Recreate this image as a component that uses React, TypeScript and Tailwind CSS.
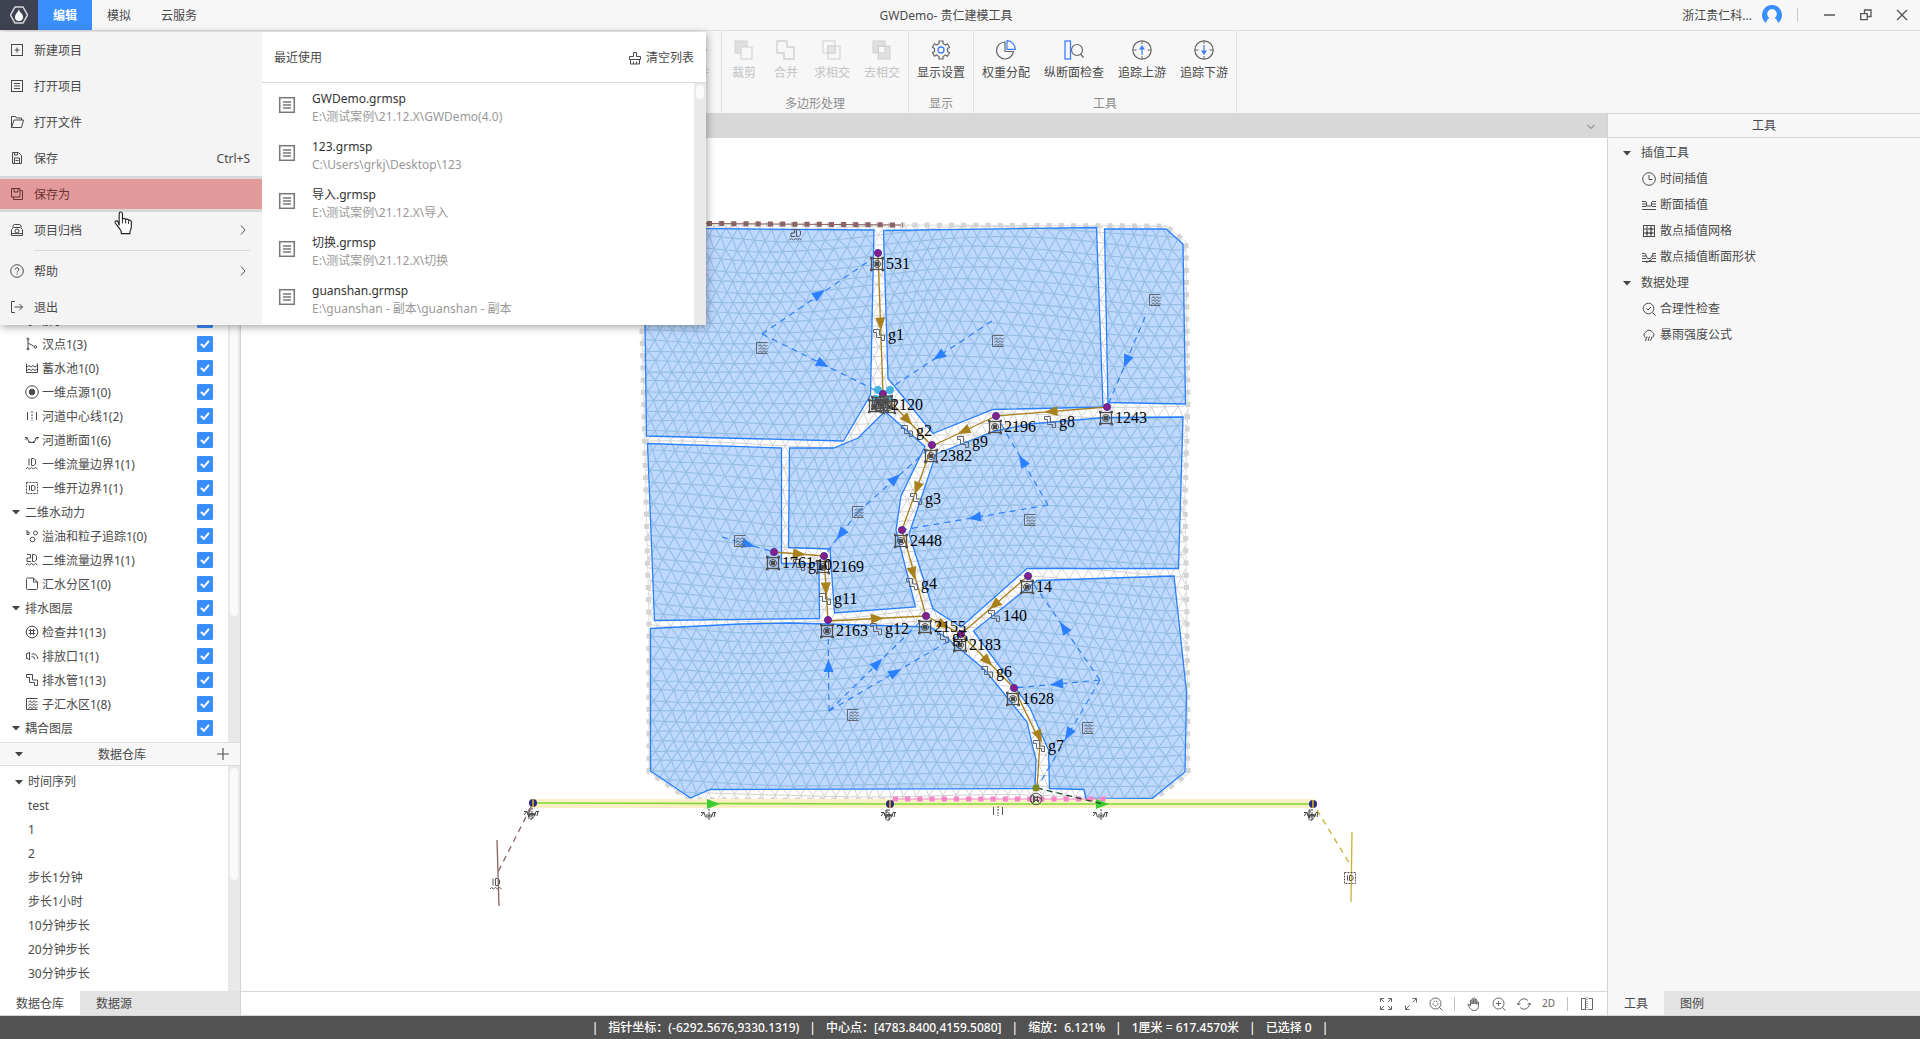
import React, { useState } from 'react';
import type { ReactNode } from 'react';

/* ------------------------------------------------------------------ */
/* Icons (14 x 14 grid)                                                */
/* ------------------------------------------------------------------ */

const glyphs: Record<string, ReactNode> = {
  newProject: (<><rect x="1.5" y="1.5" width="11" height="11" /><path d="M7 4.5v5M4.5 7h5" /></>),
  openProject: (<><rect x="1.5" y="1.5" width="11" height="11" /><path d="M4 4.5h6M4 7h6M4 9.5h6" /></>),
  openFile: (<path d="M1.5 12.5v-11h4l1 1.5h5v2M1.5 12.5l2.5-7.5h9.5l-2 7.5z" />),
  save: (<><path d="M2.5 1.5h6l3 3v8h-9z" /><path d="M4.500 1.500v2.500h3v-2.500M4.500 12.500v-5.500h5v5.500M5.500 9.500h3" /></>),
  saveAs: (<><path d="M1.500 1.500h8.500v8.500h-8.500z" /><path d="M4 1.500v3.500h4v-3.500M10 3.500h2.500v9h-9v-2.500" /></>),
  archive: (<><path d="M3 4.500v-2l1.500-1h5l1.500 1v2M1.500 12.500v-6l2-2h7l2 2v6z" /><circle cx="7" cy="8" r="2" /><path d="M1.500 10.500h11" /></>),
  help: (<><circle cx="7" cy="7" r="6.300" /><path d="M5.200 5.500a1.800 1.800 0 1 1 2.600 1.700c-.6.300-.8.600-.8 1.300M7 9.700v1" /></>),
  exit: (<path d="M5 1.500h-3.500v11h3.500M4.500 7h8M9.500 4l3 3-3 3" />),
  brush: (<path d="M5.500 1.500h3v4h4v3h-11v-3h4zM2.500 8.500v4.500h9v-4.500M5.500 13v-2.500M8.500 13v-2.500" />),
  branch: (<><path d="M3 3v9M3 6l6.500 3.500" /><circle cx="3" cy="2" r="1" /><circle cx="3" cy="12" r="1" /><circle cx="10.500" cy="10" r="1.200" /></>),
  pond: (<path d="M1.500 2.500v9h11v-9M2 6l2-1.500 2 1.500 2-1.500 2 1.500 2-1.500M2 9.500l2-1.500 2 1.500 2-1.500 2 1.500 2-1.500" />),
  pointSource: (<><circle cx="7" cy="7" r="6.300" /><circle cx="7" cy="7" r="2.800" fill="currentColor" /></>),
  centerline: (<><path d="M2.500 3v8M11.500 3v8" /><path d="M7 2v10" strokeDasharray="2 1" /></>),
  crossSection: (<path d="M0 4.500h2l-1.500 2.500M2 4.500l2 5h5.500l1.500-5h3M11.500 4.500l1 2M5 9.500v-1.500M8.500 9.500v-1.500" />),
  flow1d: (<><path d="M4 1.500v7M6.500 1.500v7h2l2-1.500v-4l-2-1.500z" /><path d="M1 12l1.500-1.500 2 1.500 2-1.500 2 1.500 2-1.500 2 1.500" /></>),
  open1d: (<><rect x="1.500" y="1.500" width="11" height="11" strokeDasharray="2 1" /><path d="M4.500 4.500v5M6.500 4.500v5h2l1.500-1v-3l-1.500-1z" /></>),
  particles: (<><path d="M2 1v4.500h2v-2.500h-2" /><circle cx="10.500" cy="4" r="2" /><circle cx="7.500" cy="10.500" r="2.300" /></>),
  flow2d: (<><path d="M2 1.500h3.500v3.500h-3.500v3.500h4M7.500 1.500v7h2l2-1.500v-4l-2-1.500z" /><path d="M1 12l1.500-1.500 2 1.500 2-1.500 2 1.500 2-1.500 2 1.500" /></>),
  area: (<path d="M1.500 2.500v9q0 1 1 1h9q1 0 1-1v-6.500l-4-4h-6q-1 0-1 1.500zM8.500 1v4h4" />),
  manhole: (<><circle cx="7" cy="7" r="5.800" /><path d="M5.500 4v6M8.500 4v6M4 5.500h6M4 8.500h6" /></>),
  outfall: (<path d="M1.500 4.500h1.500l1.500-1.500v8l-1.500-1.500h-1.500zM6.500 5q5-1.500 6.500 5M6.500 7.500q3 0 3.500 3" />),
  pipe: (<path d="M1.500 1.500h6v5.500h5v5.500h-3v-3h-5v-5h-3z" />),
  subcatchment: (<><path d="M12.500 1.500h-11v11h11" /><path d="M3.500 5.500l1.500-1.800 2 1.800 2-1.800 2 1.800 1.500-1.500M3.500 8.500l1.500-1.800 2 1.800 2-1.800 2 1.800 1.500-1.500M3.500 11.500l1.500-1.800 2 1.800 2-1.800 2 1.800 1.500-1.500" /></>),
  clock: (<><circle cx="7" cy="7" r="6.300" /><path d="M7 3v4.500h3.500" /></>),
  sectionInterp: (<path d="M0 3.500h4M0 6h4M0 8.500h4M0 11.500h14M10 3.500h4M10 6h4M10 8.500h4M4.500 4v4h5v-4" />),
  gridInterp: (<><rect x="1.500" y="1.500" width="11" height="11" /><path d="M1.500 5h11M1.500 9h11M5 1.500v11M9 1.500v11" /><circle cx="5" cy="9" r="1" fill="currentColor" /><circle cx="9" cy="5" r="1" fill="currentColor" /><circle cx="9" cy="9" r="1" fill="currentColor" /></>),
  shapeInterp: (<path d="M0 3.500h3.500M0 6h4M0 8.500h4M0 11.500h14M10.500 3.500h3.500M10 6h4M10 8.500h4M3.500 4l2 4.500h3l3-5.500M4 12.500l6-3" />),
  check: (<><circle cx="6.500" cy="6.500" r="5.300" /><path d="M4.500 6.500l1.500 1.500 3-3M10.500 10.500l3 3" /></>),
  rain: (<path d="M3.500 9.500a2.800 2.800 0 0 1 0-5 3.800 3.800 0 0 1 7 0 2.800 2.800 0 0 1 0 5M5 8.500l-1.500 4.500M7.500 8.500l-1.500 4.500M10 8.500l-1.500 4.500" />),
  fullIn: (<path d="M1.500 5v-3.500h3.500M1.500 1.500l3.500 3.500M9 1.500h3.500v3.500M12.500 1.500l-3.500 3.500M1.500 9v3.500h3.500M1.500 12.500l3.500-3.500M12.500 9v3.500h-3.500M12.500 12.500l-3.500-3.500" />),
  expand: (<path d="M8.500 1.500h4v4M12.500 1.500l-4 4M1.500 8.500v4h4M1.500 12.500l4-4" />),
  zoomArea: (<><circle cx="6.500" cy="6.500" r="5.500" /><circle cx="6.500" cy="6.500" r="2.500" strokeDasharray="2 1" /><path d="M10.500 10.500l3 3" /></>),
  hand: (<path d="M3.500 9v-5.500q.8-1 1.500 0v3.500-5q.8-1 1.600 0v5-5.500q.8-1 1.600 0v5.500-4.500q.8-1 1.600 0v5-2.500q1-.8 1.700 0v3.500q0 5-4.500 5-2.500 0-4-2.500l-2-3q0-1.500 1.200-.8z" />),
  zoomIn: (<><circle cx="6.500" cy="6.500" r="5.500" /><path d="M10.500 10.500l3 3M6.500 4v5M4 6.500h5" /></>),
  rotate: (<path d="M1.500 7.500a5.500 5.500 0 0 1 9.500-4M12.500 6.500a5.500 5.500 0 0 1-9.500 4M0 6l1.500 2 2-1.500M14 8l-1.500-2-2 1.500" />),
  split: (<><path d="M5.500 1.500h-4v11h4zM8.500 1.500h4v11h-4" /><path d="M7 0v14" strokeDasharray="1 1" /></>),
};

function Icon({ name }: { name: string }) {
  return (
    <svg viewBox="0 0 14 14" className="size-3.5 shrink-0" fill="none" stroke="currentColor" strokeWidth="1" aria-hidden="true">
      {glyphs[name]}
    </svg>
  );
}

function Caret() {
  return (
    <svg viewBox="0 0 8 5" className="h-[5px] w-2 shrink-0" aria-hidden="true">
      <path d="M0 0h8l-4 4.500z" fill="#444" />
    </svg>
  );
}

/* ------------------------------------------------------------------ */
/* Title bar                                                           */
/* ------------------------------------------------------------------ */

function TitleBar() {
  return (
    <header className="relative flex h-[31px] shrink-0 items-stretch border-b border-[#e0e0e0] bg-[#f7f7f7]">
      <div className="flex w-[38px] items-center justify-center bg-[#3f4250]">
        <svg viewBox="0 0 18 18" className="size-[18px]" fill="none" aria-hidden="true">
          <path d="M5 1h8l4.500 8-4.500 8h-8l-4.500-8z" stroke="#d8d8dc" strokeWidth="1.500" />
          <path d="M9 3c-.5 3-4 5-4 8a4 4 0 0 0 8 0c0-2-1-3-2-4-1-1-2-2.500-2-4z" fill="#fff" />
        </svg>
      </div>
      <nav className="flex">
        <button className="w-[54px] bg-[#3a8fff] pt-px font-bold text-white">编辑</button>
        <button className="w-[54px] pt-px">模拟</button>
        <button className="w-[66px] pt-px">云服务</button>
      </nav>
      <h1 className="pointer-events-none absolute inset-x-0 top-2 pr-7 text-center leading-4">GWDemo- 贵仁建模工具</h1>
      <div className="ml-auto flex items-center">
        <span className="pt-px">浙江贵仁科...</span>
        <svg viewBox="0 0 20 20" className="ml-2.5 size-5" aria-hidden="true">
          <path d="M4 18a10 10 0 1 1 12 0q-1-4-3.500-5a4.800 4.800 0 1 0-5 0q-2.500 1-3.500 5z" fill="#3a8fff" />
        </svg>
        <span className="ml-[15px] h-3.5 w-px bg-[#c8c8c8]" />
        <button aria-label="最小化" className="ml-3.5 flex w-9 justify-center">
          <svg viewBox="0 0 12 12" className="size-3"><path d="M0 6h11" stroke="#555" strokeWidth="1.500" /></svg>
        </button>
        <button aria-label="还原" className="flex w-9 justify-center">
          <svg viewBox="0 0 12 12" className="size-3" fill="none" stroke="#555" strokeWidth="1.300"><path d="M.7 4.700h6.500v6h-6.500zM4.500 4.500v-3.500h6.500v6.500h-3.500" /></svg>
        </button>
        <button aria-label="关闭" className="flex w-9 justify-center">
          <svg viewBox="0 0 12 12" className="size-3" stroke="#555" strokeWidth="1.400"><path d="M1 1l10 10M11 1l-10 10" /></svg>
        </button>
      </div>
    </header>
  );
}

/* ------------------------------------------------------------------ */
/* Ribbon                                                              */
/* ------------------------------------------------------------------ */

const ribbonGlyphs: Record<string, ReactNode> = {
  crop: (<><rect x="1" y="1" width="12" height="12" fill="#e0e0e0" stroke="#cfcfcf" /><rect x="7" y="7" width="11" height="12" fill="#f7f7f7" stroke="#cfcfcf" /></>),
  merge: (<path d="M1 1h10v6h7v12h-10v-6h-7z" fill="#f7f7f7" stroke="#cfcfcf" strokeWidth="1.300" />),
  intersect: (<><rect x="1" y="1" width="12" height="12" stroke="#cfcfcf" /><rect x="6" y="6" width="12" height="13" stroke="#cfcfcf" /><rect x="6" y="6" width="7" height="7" fill="#e4e4e4" stroke="#cfcfcf" /></>),
  exclude: (<><rect x="1" y="1" width="12" height="12" fill="#e0e0e0" stroke="#cfcfcf" /><rect x="6" y="6" width="12" height="13" fill="#e0e0e0" stroke="#cfcfcf" /><rect x="6.500" y="6.500" width="6.500" height="6.500" fill="#f7f7f7" stroke="#cfcfcf" /></>),
  gear: (<><path d="M8 1h4v2.500l2.500 1.500 2-1.200 2 3.400-2 1.300v3l2 1.300-2 3.400-2-1.200-2.500 1.500v2.500h-4v-2.500l-2.500-1.500-2 1.200-2-3.400 2-1.300v-3l-2-1.300 2-3.400 2 1.200 2.500-1.500z" stroke="#666" strokeWidth="1.200" /><circle cx="10" cy="10" r="3" stroke="#3f7dff" strokeWidth="1.300" /></>),
  pie: (<><path d="M9 2a8.500 8.500 0 1 0 8.500 9.500h-8.500z" stroke="#666" strokeWidth="1.200" /><path d="M11 .7a8.500 8.500 0 0 1 8.300 8.600h-8.300z" stroke="#3f7dff" strokeWidth="1.200" /></>),
  profile: (<><rect x="1" y="1" width="5.500" height="18" stroke="#3f7dff" strokeWidth="1.300" /><circle cx="13" cy="10" r="5.500" stroke="#666" strokeWidth="1.200" /><path d="M16.500 14l3 3.500" stroke="#666" strokeWidth="1.300" /></>),
  up: (<><circle cx="10" cy="10" r="9.200" stroke="#666" strokeWidth="1.200" /><path d="M10 1v3M10 16v3M1 10h3.500M15.500 10h3.500" stroke="#666" /><path d="M10 15v-7" stroke="#3f7dff" strokeWidth="1.200" /><path d="M7 9.500l3-4.500 3 4.500z" fill="#3f7dff" /></>),
  down: (<><circle cx="10" cy="10" r="9.200" stroke="#666" strokeWidth="1.200" /><path d="M10 1v3M10 16v3M1 10h3.500M15.500 10h3.500" stroke="#666" /><path d="M10 5v7" stroke="#3f7dff" strokeWidth="1.200" /><path d="M7 10.500l3 4.500 3-4.500z" fill="#3f7dff" /></>),
  line: (<path d="M0 10h20" stroke="#8fb4ff" strokeWidth="1.200" />),
};

interface Tool { icon: string; label: string; disabled?: boolean }

function RibbonGroup({ title, tools, className = '' }: { title?: string; tools: Tool[]; className?: string }) {
  return (
    <section className={`flex flex-col border-r border-[#e0e0e0] ${className}`}>
      <div className="flex justify-end px-px pt-[9px]">
        {tools.map((t) => (
          <button key={t.label} disabled={t.disabled} className="flex min-w-[42px] flex-col items-center gap-[5px] px-[7px] disabled:text-[#c4c4c4]">
            <svg viewBox="0 0 20 20" className="size-5" fill="none" aria-hidden="true">{ribbonGlyphs[t.icon]}</svg>
            <span className="whitespace-nowrap leading-4">{t.label}</span>
          </button>
        ))}
      </div>
      {title && <div className="mt-[15px] text-center leading-4 text-[#8c8c8c]">{title}</div>}
    </section>
  );
}

function Ribbon() {
  return (
    <div className="flex h-[82px] shrink-0 bg-[#f7f7f7]">
      <RibbonGroup className="w-[722px] pr-0.5" tools={[{ icon: 'line', label: '合并', disabled: true }]} />
      <RibbonGroup
        title="多边形处理"
        tools={[
          { icon: 'crop', label: '裁剪', disabled: true },
          { icon: 'merge', label: '合并', disabled: true },
          { icon: 'intersect', label: '求相交', disabled: true },
          { icon: 'exclude', label: '去相交', disabled: true },
        ]}
      />
      <RibbonGroup title="显示" tools={[{ icon: 'gear', label: '显示设置' }]} />
      <RibbonGroup
        title="工具"
        tools={[
          { icon: 'pie', label: '权重分配' },
          { icon: 'profile', label: '纵断面检查' },
          { icon: 'up', label: '追踪上游' },
          { icon: 'down', label: '追踪下游' },
        ]}
      />
    </div>
  );
}

/* ------------------------------------------------------------------ */
/* Left panel                                                          */
/* ------------------------------------------------------------------ */

const layers: { id: string; label: string; icon?: string }[] = [
  { id: 'net', label: '水动力' },
  { id: 'branch', label: '汊点1(3)', icon: 'branch' },
  { id: 'pond', label: '蓄水池1(0)', icon: 'pond' },
  { id: 'src', label: '一维点源1(0)', icon: 'pointSource' },
  { id: 'center', label: '河道中心线1(2)', icon: 'centerline' },
  { id: 'section', label: '河道断面1(6)', icon: 'crossSection' },
  { id: 'flow1', label: '一维流量边界1(1)', icon: 'flow1d' },
  { id: 'open1', label: '一维开边界1(1)', icon: 'open1d' },
  { id: 'hydro2', label: '二维水动力' },
  { id: 'oil', label: '溢油和粒子追踪1(0)', icon: 'particles' },
  { id: 'flow2', label: '二维流量边界1(1)', icon: 'flow2d' },
  { id: 'zone', label: '汇水分区1(0)', icon: 'area' },
  { id: 'drain', label: '排水图层' },
  { id: 'well', label: '检查井1(13)', icon: 'manhole' },
  { id: 'outfall', label: '排放口1(1)', icon: 'outfall' },
  { id: 'pipe', label: '排水管1(13)', icon: 'pipe' },
  { id: 'sub', label: '子汇水区1(8)', icon: 'subcatchment' },
  { id: 'couple', label: '耦合图层' },
];

function LayerRow({ id, label, icon }: { id: string; label: string; icon?: string }) {
  const [on, setOn] = useState(true);
  return (
    <li className="flex h-6 items-center pr-[15px]">
      {icon ? (
        <span className="ml-[25px] mr-[3px] flex"><Icon name={icon} /></span>
      ) : (
        <span className="ml-3 mr-[5px] flex"><Caret /></span>
      )}
      <label htmlFor={`layer-${id}`} className="flex-1 whitespace-nowrap pt-px">{label}</label>
      <span className="relative -mt-px flex size-4">
        <input
          id={`layer-${id}`}
          type="checkbox"
          checked={on}
          onChange={() => setOn(!on)}
          className="size-4 appearance-none rounded-[1px] border border-[#bbb] checked:border-[#3a8fff] checked:bg-[#3a8fff]"
        />
        {on && (
          <svg viewBox="0 0 16 16" className="pointer-events-none absolute inset-0" fill="none" aria-hidden="true">
            <path d="M4 8l3 2.800 5-6" stroke="#fff" strokeWidth="2" />
          </svg>
        )}
      </span>
    </li>
  );
}

const series = ['test', '1', '2', '步长1分钟', '步长1小时', '10分钟步长', '20分钟步长', '30分钟步长'];

function LeftPanel() {
  return (
    <aside className="flex w-[241px] shrink-0 flex-col border-r border-[#d4d4d4] bg-white">
      <div className="flex min-h-0 flex-1">
        <ul className="flex flex-1 flex-col justify-end overflow-hidden pb-0.5">
          {layers.map((l) => <LayerRow key={l.id} {...l} />)}
        </ul>
        <div className="w-3 bg-[#e9e9e9] px-0.5">
          <div className="h-4/5 rounded-full bg-[#fafafa]" />
        </div>
      </div>
      <div className="flex h-6 items-center border-y border-[#dedede] bg-[#f7f7f7] pl-[15px] pr-[11px]">
        <Caret />
        <h2 className="flex-1 pl-1 pt-px text-center">数据仓库</h2>
        <button aria-label="添加" className="flex">
          <svg viewBox="0 0 12 12" className="size-3" stroke="#555" strokeWidth="1.200"><path d="M6 0v12M0 6h12" /></svg>
        </button>
      </div>
      <div className="flex">
        <ul className="flex-1 pb-[5px] pt-1">
          <li className="flex h-6 items-center gap-[5px] pl-[15px]"><Caret />时间序列</li>
          {series.map((s) => <li key={s} className="flex h-6 items-center pl-7">{s}</li>)}
        </ul>
        <div className="w-3 bg-[#e9e9e9] px-0.5 pt-0.5">
          <div className="h-1/2 rounded-full bg-[#fafafa]" />
        </div>
      </div>
      <div className="flex h-[25px] border-b border-[#d4d4d4] bg-[#e3e3e3]">
        <button className="w-20 bg-white pt-px">数据仓库</button>
        <button className="w-[68px] pt-px">数据源</button>
      </div>
    </aside>
  );
}

/* ------------------------------------------------------------------ */
/* Map                                                                 */
/* ------------------------------------------------------------------ */

function buildMesh() {
  const cols = 50;
  const rows = 58;
  const vertex = (i: number, j: number): [number, number] => {
    const x = 624 + i * 12.2 + (j % 2 ? 6.1 : 0);
    const y = 212 + j * 10.6;
    const jitter = Math.sin(i * 12.9 + j * 78.2) * 0.8;
    return [
      x + 4 * Math.sin(y / 47) + 3 * Math.sin(x / 31 + y / 60) + jitter,
      y + 4 * Math.sin(x / 60 + 1) + 4 * Math.sin(y / 55 + x / 80) - jitter,
    ];
  };
  const parts: string[] = [];
  const seg = (a: [number, number], b: [number, number]) =>
    parts.push(`M${a[0].toFixed(1)} ${a[1].toFixed(1)}L${b[0].toFixed(1)} ${b[1].toFixed(1)}`);
  for (let j = 0; j < rows; j++) {
    for (let i = 0; i < cols; i++) {
      const p = vertex(i, j);
      seg(p, vertex(i + 1, j));
      seg(p, vertex(j % 2 ? i : i - 1, j + 1));
      seg(p, vertex(j % 2 ? i + 1 : i, j + 1));
    }
  }
  return parts.join('');
}

const mesh = buildMesh();

const domain =
  '644,224 901,225 1166,226 1186,242 1188,405 1185,500 1187,620 1188,774 1152,800 690,800 649,772 649,622 642,330 641,240';

const zones = [
  '644,228 874,230 870.5,395 843.5,441 646.5,436 645,325',
  '883.5,230.5 1096.5,227.5 1103,407 993,409.5 933,433.5 888,378.5',
  '1104.5,229 1166,229 1183,244 1185.5,404 1108,402.5',
  '647.5,443.5 781.5,448 781.5,563.5 819,563.5 819.5,618.5 654.5,620.5',
  '789.5,448 833.5,448 858,438 885,411.5 925,446.5 901,496 896,530 915.5,607 834.5,613 830,549 788.5,547.5',
  '936,454 995,431 1030,424 1105,417.5 1183,417 1178.5,568.5 1027,568.5 961,627 933,609 909,534',
  '1174,576 1037,580.5 973.5,631 1030,708 1048.5,750 1049.5,788.5 1084,789.5 1086,799.5 1152,798.5 1185,772 1186.5,692',
  '650.5,628.5 740,624 790,623 930,627 947,638 985,670 1027,722 1036,760 1035,788.5 710,789.5 690.5,798 650.5,771',
];

type Pt = [number, number];

const wells: { name: string; at: Pt }[] = [
  { name: '531', at: [878, 253] }, { name: '2120', at: [883, 394] }, { name: '2382', at: [932, 445] },
  { name: '2196', at: [996, 416] }, { name: '1243', at: [1107, 407] }, { name: '2448', at: [902, 530] },
  { name: '1761', at: [774, 552] }, { name: '2169', at: [824, 556] }, { name: '2163', at: [828, 620] },
  { name: '2155', at: [926, 616] }, { name: '2183', at: [961, 634] }, { name: '14', at: [1028, 576] },
  { name: '1628', at: [1014, 688] },
];

const pipes: { name: string; path: Pt[]; icon: Pt; arrow?: Pt }[] = [
  { name: 'g1', path: [[878, 253], [883, 394]], icon: [879, 335] },
  { name: 'g2', path: [[883, 394], [932, 446]], icon: [907, 431] },
  { name: 'g3', path: [[932, 446], [902, 530]], icon: [916, 499] },
  { name: 'g4', path: [[902, 530], [926, 616]], icon: [912, 584], arrow: [913, 573] },
  { name: 'g5', path: [[926, 616], [961, 634]], icon: [943, 637] },
  { name: 'g6', path: [[961, 634], [1014, 688]], icon: [987, 672] },
  { name: 'g7', path: [[1014, 688], [1040, 742], [1037, 788]], icon: [1039, 746], arrow: [1039, 736] },
  { name: 'g8', path: [[1107, 407], [996, 416]], icon: [1050, 422] },
  { name: 'g9', path: [[996, 416], [932, 446]], icon: [963, 442] },
  { name: 'g10', path: [[774, 552], [824, 556]], icon: [799, 565] },
  { name: 'g11', path: [[824, 556], [828, 621]], icon: [825, 599] },
  { name: 'g12', path: [[828, 621], [926, 616]], icon: [876, 629] },
  { name: '140', path: [[1028, 576], [961, 634]], icon: [994, 616] },
];

const links: { from: Pt; to: Pt; at?: Pt }[] = [
  { from: [762, 334], to: [872, 259], at: [819, 294] },
  { from: [762, 334], to: [883, 394] },
  { from: [992, 321], to: [886, 391] },
  { from: [1145, 317], to: [1108, 405] },
  { from: [858, 512], to: [932, 446] },
  { from: [858, 512], to: [824, 556] },
  { from: [1048, 505], to: [997, 417] },
  { from: [1048, 505], to: [902, 530] },
  { from: [722, 537], to: [774, 552] },
  { from: [829, 711], to: [828, 621] },
  { from: [829, 711], to: [926, 616] },
  { from: [829, 711], to: [961, 634] },
  { from: [1100, 680], to: [1028, 576] },
  { from: [1100, 680], to: [1014, 688] },
  { from: [1100, 680], to: [1037, 788] },
];

const catchments: Pt[] = [[762, 348], [998, 341], [1155, 300], [858, 512], [1030, 520], [740, 541], [853, 715], [1088, 728]];

function Arrow({ at, from, to, fill }: { at: Pt; from: Pt; to: Pt; fill: string }) {
  const angle = (Math.atan2(to[1] - from[1], to[0] - from[0]) * 180) / Math.PI;
  return <path d="M7 0L-6 -5V5z" fill={fill} transform={`translate(${at[0]} ${at[1]}) rotate(${angle})`} />;
}

const mid = (a: Pt, b: Pt): Pt => [(a[0] + b[0]) / 2, (a[1] + b[1]) / 2];

function MapGlyph({ name, at }: { name: string; at: Pt }) {
  return <g transform={`translate(${at[0] - 7} ${at[1] - 7})`}>{glyphs[name]}</g>;
}

function WellBox({ x, y }: { x: number; y: number }) {
  return (
    <g transform={`translate(${x} ${y})`} fill="none" stroke="#4f4f4f" strokeWidth="1.300">
      <rect x="-5.500" y="-5.500" width="11" height="11" />
      <circle r="3.500" strokeWidth="1" />
      <rect x="-1.500" y="-1.500" width="3" height="3" fill="#444" />
      <path d="M-7 -6h2.500M4.500 -6h2.500M-7 6h2.500M4.500 6h2.500" strokeWidth="2.500" />
    </g>
  );
}

function SectionMark({ x, y, dense }: { x: number; y: number; dense?: boolean }) {
  return (
    <g transform={`translate(${x} ${y})`} fill="none" stroke="#444" strokeWidth="1">
      <path d="M-8 -2.500h3l1.500 4.500h6l1.500 -4.500h3M-8 1l3 -3.500M5 2l1 -4.500M-3 0h6" />
      <path d="M0 -6V6" strokeDasharray="2 1" />
      {dense && <path d="M-3 -5V5M-2 -6v4M-5 0h9M-4 3l4 -4l3 3M-2 5a2 2 0 0 0 3 -2" />}
    </g>
  );
}

function RiverNode({ x, y }: { x: number; y: number }) {
  return (
    <g>
      <circle cx={x} cy={y} r="4" fill="#2a2a80" />
      <path d={`M${x} ${y - 4}v8`} stroke="#e8b820" strokeWidth="1.500" />
    </g>
  );
}

function MapCanvas() {
  return (
    <svg viewBox="241 138 1366 853" className="block size-full" role="img" aria-label="模型平面图">
      <defs>
        <clipPath id="domain-clip"><polygon points={domain} /></clipPath>
        <clipPath id="zone-clip">{zones.map((z) => <polygon key={z} points={z} />)}</clipPath>
      </defs>

      <path d={mesh} clipPath="url(#domain-clip)" stroke="#d2d2d2" strokeWidth="1" fill="none" />
      <polygon points={domain} fill="none" stroke="#dcdcdc" />
      <polygon points={domain} fill="none" stroke="#d4d4d4" strokeWidth="5" strokeDasharray="5 7.2" />

      <g fill="#bfd8ff">{zones.map((z) => <polygon key={z} points={z} />)}</g>
      <path d={mesh} clipPath="url(#zone-clip)" stroke="#97bfe5" strokeWidth="1.200" fill="none" />
      <g fill="none" stroke="#2a80ff" strokeWidth="1.300">{zones.map((z) => <polygon key={z} points={z} />)}</g>

      <path d="M646 223L901 225" stroke="#8a6464" />
      <path d="M646 223L903 225" stroke="#8a6464" strokeWidth="5" strokeDasharray="5 7.2" />

      <path d="M530 803.500H1314" stroke="#fdf0c4" strokeWidth="9" />
      <path d="M533 803L890 804H1312" stroke="#7fd838" strokeWidth="1.600" fill="none" />
      <path d="M892 800L896 799H1103" stroke="#f783c8" fill="none" />
      <path d="M893 799H1106" stroke="#f783c8" strokeWidth="5" strokeDasharray="5 7.2" />
      <Arrow at={[713, 804]} from={[0, 0]} to={[1, 0]} fill="#3dcc33" />
      <Arrow at={[1102, 804]} from={[0, 0]} to={[1, 0]} fill="#3dcc33" />
      <RiverNode x={533} y={803} />
      <RiverNode x={890} y={804} />
      <RiverNode x={1313} y={804} />
      <SectionMark x={532} y={814} dense />
      <SectionMark x={709} y={815} />
      <SectionMark x={889} y={815} dense />
      <SectionMark x={1101} y={815} />
      <SectionMark x={1312} y={815} dense />

      <g fill="none" strokeWidth="1.300">
        <path d="M531 807L498 872" stroke="#8a6464" strokeDasharray="6 5" />
        <path d="M497 840L499 906" stroke="#8a6464" />
        <path d="M1317 810L1351 866" stroke="#c9b037" strokeDasharray="6 5" />
        <path d="M1352 832L1351 902" stroke="#c9b037" />
        <path d="M1037 788L1103 804" stroke="#1f4a2a" strokeDasharray="6 4" />
      </g>

      <g fill="none" stroke="#2a80ff" strokeWidth="1.200" strokeDasharray="6 5">
        {links.map((l, i) => <path key={i} d={`M${l.from}L${l.to}`} />)}
      </g>
      {links.map((l, i) => <Arrow key={i} at={l.at ?? mid(l.from, l.to)} from={l.from} to={l.to} fill="#2a80ff" />)}

      <g fill="#46b4e0">
        <circle cx="878" cy="390" r="4" /><circle cx="890" cy="390" r="4" />
        <circle cx="876" cy="399" r="4" /><circle cx="889" cy="399" r="4" />
      </g>

      <g fill="none" stroke="#a8801c" strokeWidth="1.300">
        {pipes.map((p) => <path key={p.name} d={`M${p.path.join('L')}`} />)}
      </g>
      {pipes.map((p) => (
        <Arrow key={p.name} at={p.arrow ?? mid(p.path[0], p.path[1])} from={p.path[0]} to={p.path[1]} fill="#a8801c" />
      ))}

      <g fill="none" stroke="#62666e" strokeWidth="1" color="#62666e">
        {pipes.map((p) => <MapGlyph key={p.name} name="pipe" at={p.icon} />)}
        {catchments.map((c) => <MapGlyph key={c.join()} name="subcatchment" at={c} />)}
      </g>
      <g fill="none" stroke="#555" strokeWidth="1" color="#555">
        <MapGlyph name="flow2d" at={[796, 235]} />
        <MapGlyph name="flow1d" at={[496, 884]} />
        <MapGlyph name="open1d" at={[1350, 878]} />
        <MapGlyph name="centerline" at={[998, 811]} />
        <MapGlyph name="manhole" at={[1036, 799]} />
        <MapGlyph name="outfall" at={[1036, 799]} />
      </g>

      {wells.map((w) => (
        <g key={w.name}>
          <circle cx={w.at[0]} cy={w.at[1]} r="3.500" fill="#8a1f8a" stroke="#4a2a9a" strokeWidth="1" />
          <WellBox x={w.at[0] - 1} y={w.at[1] + 11} />
        </g>
      ))}
      <WellBox x={875} y={406} />
      <WellBox x={878} y={403} />
      <WellBox x={886} y={402} />
      <WellBox x={889} y={407} />
      <circle cx="1036" cy="788" r="3.500" fill="#7d8a1c" />

      <g fontSize="16" fill="#000" fontFamily='"Liberation Serif", serif'>
        {wells.map((w) => <text key={w.name} x={w.at[0] + 8} y={w.at[1] + 16}>{w.name}</text>)}
        {pipes.map((p) => <text key={p.name} x={p.icon[0] + 9} y={p.icon[1] + 5}>{p.name}</text>)}
      </g>
    </svg>
  );
}

function ToolbarButton({ name, label }: { name: string; label: string }) {
  return (
    <button aria-label={label} className="flex w-[25px] justify-center text-[#666]"><Icon name={name} /></button>
  );
}

function Center() {
  return (
    <main className="flex min-w-0 flex-1 flex-col bg-white">
      <div className="flex h-[25px] shrink-0 items-center justify-end bg-[#d8d8d8] pr-3">
        <button aria-label="标签页列表" className="flex">
          <svg viewBox="0 0 8 8" className="size-2" fill="none" stroke="#666"><path d="M.5 3l3.500 3.500 3.500-3.500" /></svg>
        </button>
      </div>
      <div className="min-h-0 flex-1"><MapCanvas /></div>
      <div className="flex h-[25px] shrink-0 items-center justify-end border-y border-[#d8d8d8] pr-2">
        <ToolbarButton name="fullIn" label="全图" />
        <ToolbarButton name="expand" label="放大窗口" />
        <ToolbarButton name="zoomArea" label="缩放到选中" />
        <span className="mx-1.5 h-3.5 w-px bg-[#c0c0c0]" />
        <ToolbarButton name="hand" label="平移" />
        <ToolbarButton name="zoomIn" label="放大" />
        <ToolbarButton name="rotate" label="旋转" />
        <button className="w-[25px] text-center text-[10px] text-[#666]">2D</button>
        <span className="mx-1.5 h-3.5 w-px bg-[#c0c0c0]" />
        <ToolbarButton name="split" label="分屏" />
      </div>
    </main>
  );
}

/* ------------------------------------------------------------------ */
/* Right panel                                                         */
/* ------------------------------------------------------------------ */

const toolTree = [
  { title: '插值工具', items: [['clock', '时间插值'], ['sectionInterp', '断面插值'], ['gridInterp', '散点插值网格'], ['shapeInterp', '散点插值断面形状']] },
  { title: '数据处理', items: [['check', '合理性检查'], ['rain', '暴雨强度公式']] },
];

function RightPanel() {
  return (
    <aside className="flex w-[313px] shrink-0 flex-col border-l border-[#d4d4d4] bg-[#f7f7f7]">
      <h2 className="h-[25px] border-y border-[#d4d4d4] text-center leading-[23px]">工具</h2>
      <ul className="flex-1 pt-0.5">
        {toolTree.map((g) => (
          <li key={g.title}>
            <div className="flex h-[26px] items-center gap-2.5 pl-[15px]"><Caret />{g.title}</div>
            <ul>
              {g.items.map(([icon, label]) => (
                <li key={label}>
                  <button className="flex h-[26px] items-center gap-1 pl-[34px]"><Icon name={icon} />{label}</button>
                </li>
              ))}
            </ul>
          </li>
        ))}
      </ul>
      <div className="flex h-[25px] border-b border-[#d4d4d4] bg-[#e3e3e3]">
        <button className="w-14 bg-[#f7f7f7] pt-px">工具</button>
        <button className="w-14 pt-px">图例</button>
      </div>
    </aside>
  );
}

/* ------------------------------------------------------------------ */
/* File menu                                                           */
/* ------------------------------------------------------------------ */

const recent = [
  ['GWDemo.grmsp', 'E:\\测试案例\\21.12.X\\GWDemo(4.0)'],
  ['123.grmsp', 'C:\\Users\\grkj\\Desktop\\123'],
  ['导入.grmsp', 'E:\\测试案例\\21.12.X\\导入'],
  ['切换.grmsp', 'E:\\测试案例\\21.12.X\\切换'],
  ['guanshan.grmsp', 'E:\\guanshan - 副本\\guanshan - 副本'],
];

function MenuItem({ icon, label, hint, sub, active }: { icon: string; label: string; hint?: string; sub?: boolean; active?: boolean }) {
  return (
    <li className={active ? 'bg-[#d8d8d8] py-[3px]' : ''}>
      <button className={active ? 'flex h-[30px] w-full items-center bg-[#e29a9a] pl-2.5 pr-3 text-[#6b3434]' : 'flex h-9 w-full items-center pl-2.5 pr-3'}>
        <Icon name={icon} />
        <span className="ml-2.5 pt-0.5">{label}</span>
        {hint && <span className="ml-auto pt-0.5">{hint}</span>}
        {sub && (
          <svg viewBox="0 0 6 10" className="ml-auto mr-1 h-2.5 w-1.5" fill="none" stroke="#555" aria-hidden="true"><path d="M1 .5l4 4.500-4 4.500" /></svg>
        )}
      </button>
    </li>
  );
}

function FileMenu() {
  return (
    <div className="absolute left-0 top-8 flex shadow-[1px_2px_8px_rgba(0,0,0,0.35)]">
      <ul className="w-[262px] bg-[#f4f4f4]">
        <MenuItem icon="newProject" label="新建项目" />
        <MenuItem icon="openProject" label="打开项目" />
        <MenuItem icon="openFile" label="打开文件" />
        <MenuItem icon="save" label="保存" hint="Ctrl+S" />
        <MenuItem icon="saveAs" label="保存为" active />
        <MenuItem icon="archive" label="项目归档" sub />
        <li className="mb-0.5 ml-[34px] mr-3 mt-0.5 h-px bg-[#d8d8d8]" />
        <MenuItem icon="help" label="帮助" sub />
        <MenuItem icon="exit" label="退出" />
      </ul>
      <section className="flex w-[444px] flex-col bg-white">
        <div className="flex h-[51px] items-center justify-between border-b border-[#dcdcdc] px-3 pt-0.5">
          <h2>最近使用</h2>
          <button className="flex items-center gap-1"><Icon name="brush" />清空列表</button>
        </div>
        <div className="flex flex-1">
          <ul className="flex-1 pt-px">
            {recent.map(([name, path]) => (
              <li key={name}>
                <a href="#" className="flex h-12 items-start pl-4">
                  <span className="mr-4 flex pt-3 text-[#777]">
                    <svg viewBox="0 0 18 18" className="size-[18px]" fill="none" stroke="currentColor" strokeWidth="1.500" aria-hidden="true">
                      <rect x="1.700" y="1.700" width="14.600" height="14.600" /><path d="M5 6h8M5 9h8M5 12h8" />
                    </svg>
                  </span>
                  <span className="pt-1.5 leading-[18px]">
                    <span className="block text-[#333]">{name}</span>
                    <span className="block text-[#999]">{path}</span>
                  </span>
                </a>
              </li>
            ))}
          </ul>
          <div className="w-3 bg-[#e9e9e9] px-0.5 pt-0.5"><div className="h-3.5 rounded-full bg-[#fafafa]" /></div>
        </div>
      </section>
      <svg viewBox="0 0 18 25" className="absolute left-[114px] top-[179px] h-6 w-[18px]" aria-hidden="true">
        <path
          d="M5 15V3q0-2 1.700-2t1.700 2v6q.2-1.500 1.700-1.300t1.700 1.600q.3-1 1.600-.8t1.600 1.600q.5-.8 1.500-.5t1.200 1.700v5q0 2.500-1.500 5v2.200h-9v-2.200q-1-2-3-4.500l-3-4q-1-1.600.2-2.300t2.500.7z"
          fill="#fff" stroke="#222" strokeWidth="1.200"
        />
        <path d="M8.400 9v4M11.700 9.500v3.500M14.700 11v2.500" stroke="#222" />
      </svg>
    </div>
  );
}

/* ------------------------------------------------------------------ */

function StatusBar() {
  const fields = ['指针坐标：(-6292.5676,9330.1319)', '中心点：[4783.8400,4159.5080]', '缩放：6.121%', '1厘米 = 617.4570米', '已选择 0'];
  return (
    <footer className="flex h-[23px] shrink-0 items-center justify-center gap-2.5 whitespace-pre bg-[#525252] pt-px font-medium text-white">
      <span>|</span>
      {fields.map((f) => (
        <React.Fragment key={f}>
          <span>{f}</span>
          <span>|</span>
        </React.Fragment>
      ))}
    </footer>
  );
}

export default function App() {
  return (
    <div className="relative flex h-screen flex-col overflow-hidden bg-white font-['Noto_Sans','Noto_Sans_CJK_SC',sans-serif] text-xs text-[#4a4a4a]">
      <TitleBar />
      <Ribbon />
      <div className="flex min-h-0 flex-1">
        <LeftPanel />
        <Center />
        <RightPanel />
      </div>
      <StatusBar />
      <FileMenu />
    </div>
  );
}
